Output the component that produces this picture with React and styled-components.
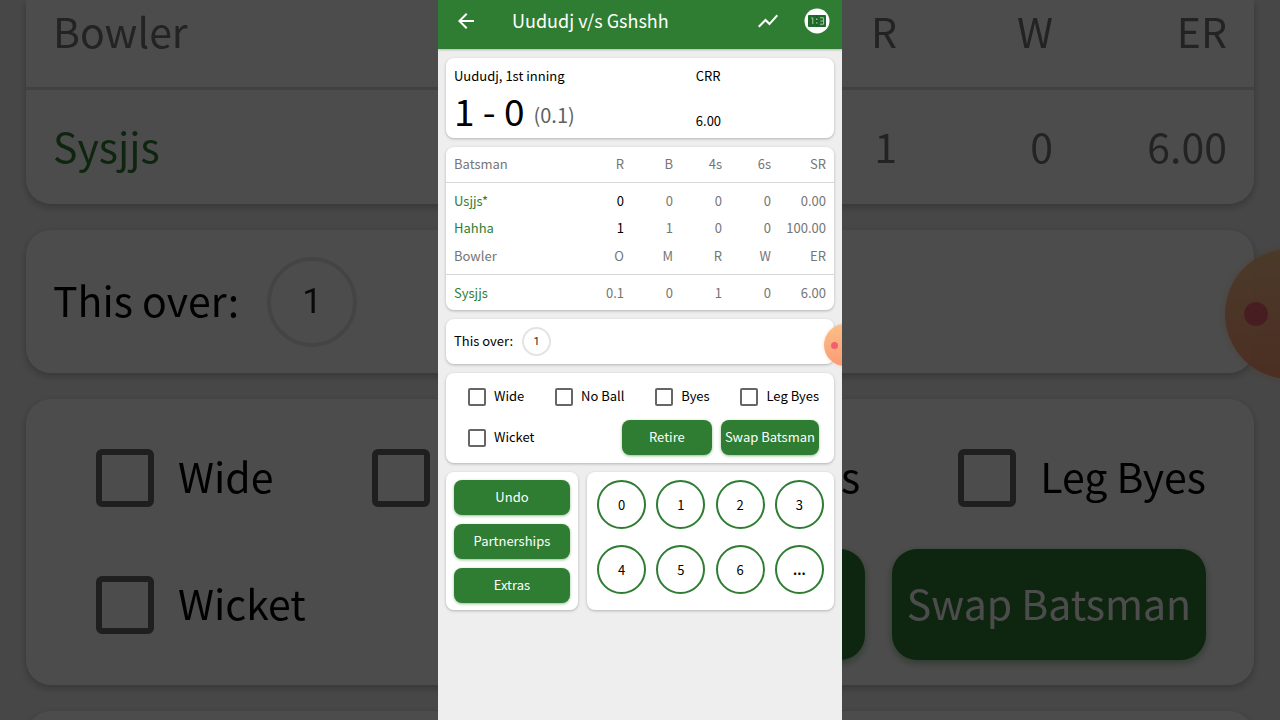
import React, { useState } from 'react';
import styled, { createGlobalStyle, ThemeProvider } from 'styled-components';
import { MdArrowBack, MdShowChart } from 'react-icons/md';

const GlobalStyle = createGlobalStyle`
  * {
    box-sizing: border-box;
  }

  body {
    margin: 0;
    font-family: 'Noto Sans CJK SC', 'Noto Sans', sans-serif;
    color: #000000;
  }

  button, input {
    font-family: inherit;
    margin: 0;
  }
`

// picks the phone value or the enlarged backdrop value
const px = (phone, backdrop) => ({ theme }) => `${theme.large ? backdrop : phone}px`;

const Stage = styled.div`
  display: grid;
  grid-template-columns: minmax(0, 1fr);
  height: 100vh;
  overflow: hidden;
`

const Backdrop = styled.div`
  grid-area: 1 / 1;
  position: relative;
  display: flex;
  flex-direction: column;
  gap: 26px;
  padding: 0 26px;
  overflow: hidden;
  background-color: #eeeeee;
  filter: brightness(0.3);
`

const Phone = styled.div`
  grid-area: 1 / 1;
  justify-self: center;
  position: relative;
  width: 100%;
  max-width: 404px;
  overflow: hidden;
  background-color: #eeeeee;
`

const AppBar = styled.header`
  display: flex;
  align-items: center;
  height: 49px;
  padding: 0 12px 8px 16px;
  background-color: #2e7d32;
  color: #ffffff;
  box-shadow: 0 1px 2px rgba(0, 0, 0, 0.25);
`

const Title = styled.h1`
  flex: 1;
  margin: 0 0 0 34px;
  padding-bottom: 2px;
  font-size: 18px;
  line-height: 28px;
  font-weight: 400;
`

const IconButton = styled.button`
  display: flex;
  padding: 0;
  border: none;
  background: none;
  color: inherit;
  cursor: pointer;

  & + & {
    margin-left: 24px;
  }
`

const Content = styled.main`
  display: flex;
  flex-direction: column;
  gap: 9px;
  padding: 9px 8px;
`

const Card = styled.section`
  flex-shrink: 0;
  background-color: #ffffff;
  border-radius: ${px(8, 25)};
  box-shadow: 0 ${px(1, 3)} ${px(3, 8)} rgba(0, 0, 0, 0.25);
`

const ScoreCard = styled(Card)`
  display: grid;
  grid-template-columns: 13fr 7fr;
  align-items: center;
  padding: 8px 8px 4px;
  font-size: 13px;
  line-height: 20px;
`

const Score = styled.div`
  display: flex;
  align-items: center;
  gap: 9px;
  font-size: 37px;
  line-height: 48px;
`

const Overs = styled.span`
  padding-top: 9px;
  font-size: 20px;
  line-height: 20px;
  color: #616161;
`

const Rate = styled.div`
  align-self: end;
  padding-bottom: 3px;
`

const StatsCard = styled(Card)`
  ${({ theme }) => theme.large && 'border-top-left-radius: 0; border-top-right-radius: 0;'}
`

const StatsTable = styled.table`
  width: 100%;
  table-layout: fixed;
  border-collapse: separate;
  border-spacing: 0;
  font-size: ${px(13, 41)};
  line-height: ${px(20, 58)};
  color: #757575;

  th, td {
    width: ${px(49, 156)};
    padding: 0 0 ${px(1, 6)};
    font-weight: 400;
    text-align: right;
  }

  th:first-child, td:first-child {
    width: auto;
    padding-left: ${px(8, 27)};
    text-align: left;
  }

  th:last-child, td:last-child {
    width: ${px(63, 201)};
    padding-right: ${px(8, 27)};
  }

  thead th {
    height: ${px(36, 90)};
    border-bottom: ${px(1, 3)} solid #d8d8d8;
  }

  tbody td, tbody th {
    height: ${px(27, 86)};
  }

  tbody::before {
    content: '';
    display: block;
    height: ${px(5, 15)};
  }
`

const BowlerTable = styled(StatsTable)`
  thead th {
    height: ${px(33, 90)};
    padding-bottom: ${px(5, 28)};
  }

  tbody::after {
    content: '';
    display: block;
    height: ${px(3, 13)};
  }
`

const Player = styled.th`
  color: #2e7d32;
`

const Runs = styled.td`
  color: #000000;
`

const OverCard = styled(Card)`
  display: flex;
  align-items: center;
  gap: ${px(9, 28)};
  height: ${px(45, 143)};
  padding: 0 ${px(8, 27)};
  font-size: ${px(13, 41)};
`

const Caption = styled.span`
  padding-bottom: ${px(2, 6)};
  visibility: ${({ $covered }) => $covered ? 'hidden' : 'visible'};
`

const Ball = styled.span`
  display: flex;
  align-items: center;
  justify-content: center;
  width: ${px(29, 90)};
  height: ${px(29, 90)};
  border: ${px(2, 4)} solid #e4e4e4;
  border-radius: 50%;
  font-family: Roboto, sans-serif;
  font-size: ${px(11, 35)};
  color: #212121;
`

const ExtrasCard = styled(Card)`
  display: flex;
  flex-direction: column;
  gap: ${px(6, 16)};
  padding: ${px(6, 23)} ${px(15, 48)} ${px(8, 25)} ${px(22, 70)};
`

const ExtrasRow = styled.div`
  display: flex;
  align-items: center;
  justify-content: space-between;
  height: ${px(35, 111)};
`

const ButtonGroup = styled.div`
  display: flex;
  gap: ${px(9, 27)};
`

const CheckLabel = styled.label`
  display: flex;
  align-items: center;
  gap: ${px(8, 24)};
  font-size: ${px(13, 41)};
  white-space: nowrap;
  cursor: pointer;
`

const CheckInput = styled.input`
  appearance: none;
  width: ${px(18, 58)};
  height: ${px(18, 58)};
  border: ${px(2, 6)} solid #666666;
  border-radius: ${px(2, 6)};
  cursor: pointer;

  &:checked {
    border-color: #2e7d32;
    background-color: #2e7d32;
  }
`

const Button = styled.button`
  min-width: ${px(90, 286)};
  height: ${px(35, 111)};
  padding: 0 ${px(4, 15)} ${px(2, 6)};
  border: none;
  border-radius: ${px(8, 25)};
  background-color: #2e7d32;
  box-shadow: 0 ${px(1, 3)} ${px(3, 8)} rgba(46, 125, 50, 0.5);
  color: #ffffff;
  font-size: ${px(13, 41)};
  white-space: nowrap;
  cursor: pointer;
`

const Pads = styled.div`
  display: flex;
  gap: 9px;
`

const ActionsCard = styled(Card)`
  display: flex;
  flex: 0 0 34%;
  flex-direction: column;
  gap: 9px;
  padding: 8px 8px 7px;
`

const RunsCard = styled(Card)`
  display: grid;
  flex: 1;
  grid-template-columns: repeat(4, 1fr);
  justify-items: center;
  align-content: start;
  row-gap: 16px;
  padding: 8px 5px;
`

const RunButton = styled.button`
  width: 49px;
  height: 49px;
  padding: 0;
  border: 2px solid #2e7d32;
  border-radius: 50%;
  background-color: #ffffff;
  color: #000000;
  font-size: 13px;
  font-weight: ${({ $bold }) => $bold ? 700 : 400};
  cursor: pointer;
`

// floating recorder bubble, half off the right edge
const Bubble = styled.div`
  position: absolute;
  top: ${px(324, 249)};
  right: ${px(-24, -75)};
  display: flex;
  align-items: center;
  width: ${px(42, 130)};
  height: ${px(42, 130)};
  padding-left: ${px(7, 19)};
  border-radius: 50%;
  background: linear-gradient(rgba(250, 190, 130, 0.95), rgba(252, 150, 110, 0.95));
  box-shadow: 0 0 ${px(3, 8)} rgba(250, 170, 120, 0.5);
`

const BubbleDot = styled.span`
  width: ${px(7, 24)};
  height: ${px(7, 24)};
  border-radius: 50%;
  background-color: #f0616d;
`

const ScoreboardIcon = () => (
  <svg width="26" height="26" viewBox="0 0 26 26" fill="none">
    <circle cx="13" cy="13" r="12.5" fill="#ffffff" />
    <rect x="4" y="7" width="18" height="12" rx="1" fill="#1f6b2b" />
    <path d="M12.7 7v12" stroke="#12501c" strokeWidth="0.6" />
    <path d="M7.2 10h1.6v6" stroke="#a9cbac" strokeWidth="1" />
    <path d="M12 10.6h1.4v1.4H12zM12 14.2h1.4v1.4H12z" fill="#a9cbac" />
    <path d="M16 9.8h3.6v6.4H16M16.4 13h3.2" stroke="#a9cbac" strokeWidth="1" />
  </svg>
)

const RecorderBubble = () => (
  <Bubble>
    <BubbleDot />
  </Bubble>
)

const Check = ({ label, covered }) => {
  const [checked, setChecked] = useState(false);

  return (
    <CheckLabel>
      <CheckInput type='checkbox' checked={ checked } onChange={() => setChecked(!checked)} />
      <Caption $covered={ covered }>{ label }</Caption>
    </CheckLabel>
  )
}

const ThisOver = () => (
  <OverCard>
    <Caption>This over:</Caption>
    <Ball>1</Ball>
  </OverCard>
)

// covered: the middle captions sit behind the phone and stay unpainted
const Extras = ({ covered }) => (
  <ExtrasCard>
    <ExtrasRow>
      <Check label='Wide' />
      <Check label='No Ball' covered={ covered } />
      <Check label='Byes' />
      <Check label='Leg Byes' />
    </ExtrasRow>
    <ExtrasRow>
      <Check label='Wicket' />
      <ButtonGroup>
        <Button type='button'><Caption $covered={ covered }>Retire</Caption></Button>
        <Button type='button'>Swap Batsman</Button>
      </ButtonGroup>
    </ExtrasRow>
  </ExtrasCard>
)

const Bowlers = ({ columns, values }) => (
  <BowlerTable>
    <thead>
      <tr>
        <th scope='col'>Bowler</th>
        { columns.map((column) => <th scope='col' key={ column }>{ column }</th>) }
      </tr>
    </thead>
    <tbody>
      <tr>
        <Player scope='row'>Sysjjs</Player>
        { values.map((value, i) => <td key={ columns[i] }>{ value }</td>) }
      </tr>
    </tbody>
  </BowlerTable>
)

const batsmen = [
  { name: 'Usjjs*', runs: '0', rest: ['0', '0', '0', '0.00'] },
  { name: 'Hahha', runs: '1', rest: ['1', '0', '0', '100.00'] },
];

const Batsmen = () => (
  <StatsTable>
    <thead>
      <tr>
        <th scope='col'>Batsman</th>
        <th scope='col'>R</th>
        <th scope='col'>B</th>
        <th scope='col'>4s</th>
        <th scope='col'>6s</th>
        <th scope='col'>SR</th>
      </tr>
    </thead>
    <tbody>
      { batsmen.map(({ name, runs, rest }) => (
        <tr key={ name }>
          <Player scope='row'>{ name }</Player>
          <Runs>{ runs }</Runs>
          { rest.map((value, i) => <td key={ i }>{ value }</td>) }
        </tr>
      )) }
    </tbody>
  </StatsTable>
)

const runOptions = ['0', '1', '2', '3', '4', '5', '6', '...'];

const App = () => (
  <Stage>
    <GlobalStyle />
    <ThemeProvider theme={{ large: true }}>
      <Backdrop inert aria-hidden='true'>
        <StatsCard>
          <Bowlers columns={['R', 'W', 'ER']} values={['1', '0', '6.00']} />
        </StatsCard>
        <ThisOver />
        <Extras covered />
        <OverCard as='div' />
        <RecorderBubble />
      </Backdrop>
    </ThemeProvider>
    <ThemeProvider theme={{ large: false }}>
      <Phone>
        <AppBar>
          <IconButton type='button' aria-label='Back'>
            <MdArrowBack size={24} />
          </IconButton>
          <Title>Uududj v/s Gshshh</Title>
          <IconButton type='button' aria-label='Run chart'>
            <MdShowChart size={24} />
          </IconButton>
          <IconButton type='button' aria-label='Scoreboard'>
            <ScoreboardIcon />
          </IconButton>
        </AppBar>
        <Content>
          <ScoreCard>
            <div>Uududj, 1st inning</div>
            <div>CRR</div>
            <Score>1 - 0 <Overs>(0.1)</Overs></Score>
            <Rate>6.00</Rate>
          </ScoreCard>
          <StatsCard>
            <Batsmen />
            <Bowlers columns={['O', 'M', 'R', 'W', 'ER']} values={['0.1', '0', '1', '0', '6.00']} />
          </StatsCard>
          <ThisOver />
          <Extras />
          <Pads>
            <ActionsCard>
              <Button type='button'>Undo</Button>
              <Button type='button'>Partnerships</Button>
              <Button type='button'>Extras</Button>
            </ActionsCard>
            <RunsCard>
              { runOptions.map((run) => (
                <RunButton type='button' key={ run } $bold={ run === '...' }>{ run }</RunButton>
              )) }
            </RunsCard>
          </Pads>
        </Content>
        <RecorderBubble />
      </Phone>
    </ThemeProvider>
  </Stage>
)

export default App;
